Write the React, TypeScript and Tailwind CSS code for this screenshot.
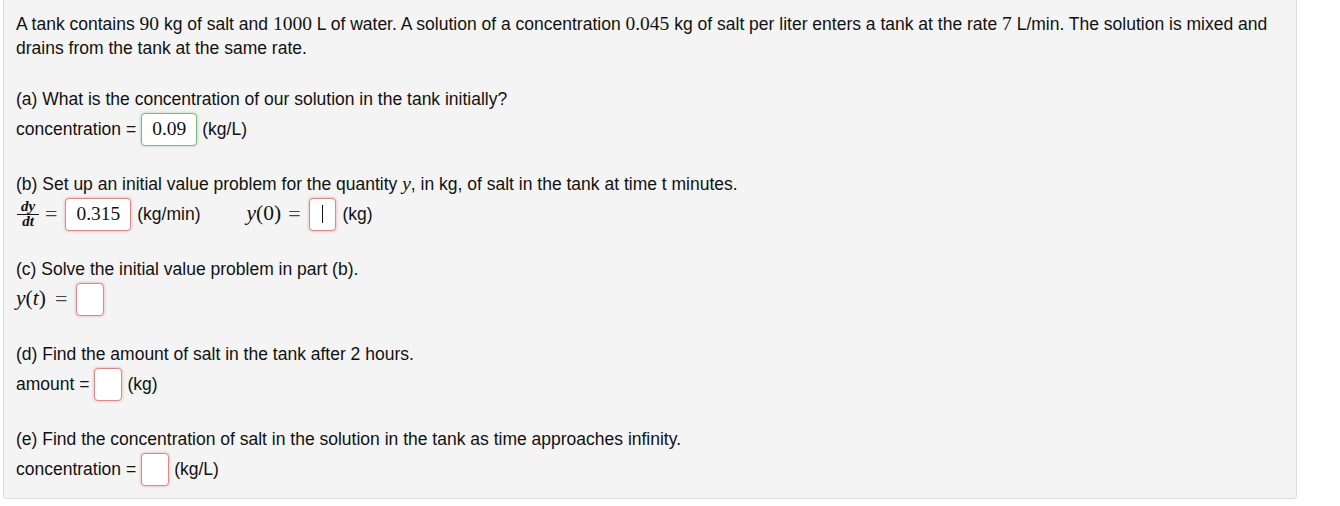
import React from "react";

const M = ({ children, i, big }: { children: React.ReactNode; i?: boolean; big?: boolean }) => (
  <span
    className={`font-['Liberation_Serif','DejaVu_Serif',serif] ${big ? "text-[21.5px]" : "text-[19.5px]"} leading-[20px] ${
      i ? "italic" : ""
    }`}
  >
    {children}
  </span>
);

const Box = ({ children, ok, w }: { children?: React.ReactNode; ok?: boolean; w?: string }) => (
  <span
    className={`inline-flex h-[33px] items-center justify-center rounded-[4px] border bg-white px-[10px] ${w ?? ""} ${
      ok
        ? "border-[#7cba7c] shadow-[0_0_3px_rgba(92,184,92,0.55)]"
        : "border-[#d88a8a] shadow-[0_0_3px_rgba(217,83,79,0.5)]"
    }`}
  >
    {children}
  </span>
);

const Eq = ({ cls }: { cls: string }) => (
  <span className={`font-['Liberation_Serif',serif] text-[22px] leading-[20px] text-[#444] ${cls}`}>=</span>
);

export default function App() {
  return (
    <div className="h-[506px] w-[1340px] bg-white font-['Liberation_Sans',Arial,sans-serif] text-[17.5px] text-[#111]">
      <div className="ml-[3px] w-[1294px] rounded-b-[4px] border border-t-0 border-[#dcdcdc] bg-[#f4f4f4] pb-[12px] pl-[12px] pr-[12px] pt-[12px]">
        <p className="leading-[24px]">
          A tank contains <M>90</M> kg of salt and <M>1000</M> L of water. A solution of a concentration <M>0.045</M> kg of salt per liter enters a tank at the rate <M>7</M> L/min. The solution is mixed and drains from the tank at the same rate.
        </p>

        <div className="mt-[27px]">
          <p className="leading-[24px]">(a) What is the concentration of our solution in the tank initially?</p>
          <div className="mt-[1px] flex h-[34px] items-center gap-[5px]">
            <span>concentration =</span>
            <Box ok>
              <M>0.09</M>
            </Box>
            <span>(kg/L)</span>
          </div>
        </div>

        <div className="mt-[26px]">
          <p className="leading-[24px]">
            (b) Set up an initial value problem for the quantity <M i>y</M>, in kg, of salt in the tank at time t minutes.
          </p>
          <div className="mt-[1px] flex h-[34px] items-center">
            <span className="ml-[1px] inline-flex w-[22px] flex-col items-center font-['Liberation_Serif',serif] text-[15px] font-bold italic leading-[13px]">
              <span>dy</span>
              <span className="mt-[1px] h-[1px] w-full bg-[#111]" />
              <span>dt</span>
            </span>
            <Eq cls="ml-[6px] mr-[8px]" />
            <Box>
              <M>0.315</M>
            </Box>
            <span className="ml-[6px]">(kg/min)</span>
            <span className="ml-[46px]">
              <M i big>
                y
              </M>
              <M big>(0)</M>
            </span>
            <Eq cls="ml-[7px] mr-[8px]" />
            <Box w="w-[27px]">
              <span className="block h-[18px] w-[1px] bg-[#111]" />
            </Box>
            <span className="ml-[7px]">(kg)</span>
          </div>
        </div>

        <div className="mt-[26px]">
          <p className="leading-[24px]">(c) Solve the initial value problem in part (b).</p>
          <div className="mt-[1px] flex h-[34px] items-center">
            <span>
              <M i big>
                y
              </M>
              <M big>(</M>
              <M i big>
                t
              </M>
              <M big>)</M>
            </span>
            <Eq cls="ml-[9px] mr-[9px]" />
            <Box w="w-[28px]" />
          </div>
        </div>

        <div className="mt-[26px]">
          <p className="leading-[24px]">(d) Find the amount of salt in the tank after 2 hours.</p>
          <div className="mt-[1px] flex h-[34px] items-center gap-[5px]">
            <span>amount =</span>
            <Box w="w-[28px]" />
            <span>(kg)</span>
          </div>
        </div>

        <div className="mt-[26px]">
          <p className="leading-[24px]">(e) Find the concentration of salt in the solution in the tank as time approaches infinity.</p>
          <div className="mt-[1px] flex h-[34px] items-center gap-[5px]">
            <span>concentration =</span>
            <Box w="w-[28px]" />
            <span>(kg/L)</span>
          </div>
        </div>
      </div>
    </div>
  );
}
